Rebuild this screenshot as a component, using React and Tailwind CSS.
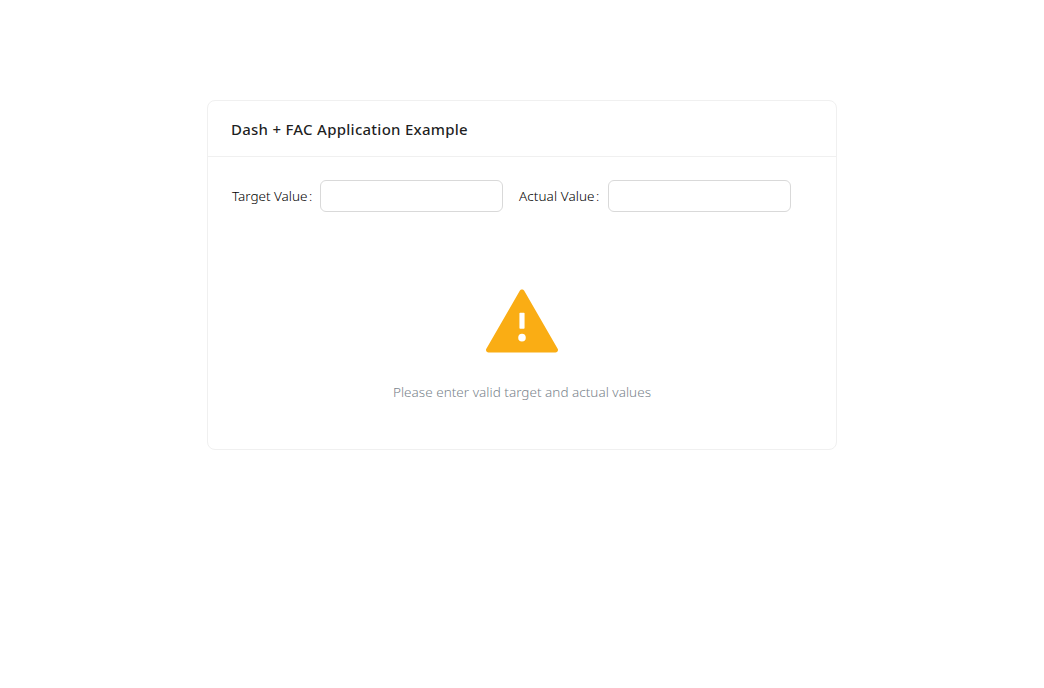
const fields = [
  { label: "Target Value", width: "w-[88px]", tracking: "tracking-[-0.02px]" },
  { label: "Actual Value", width: "w-[89px]", tracking: "tracking-[0.08px]" },
];

function Warning() {
  return (
    <svg viewBox="64 64 896 896" className="block size-[72px]" fill="#faad14" aria-hidden="true">
      <path d="M955.7 856l-416-720c-6.2-10.7-16.9-16-27.700-16s-21.600 5.300-27.700 16l-416 720C56 877.400 71.400 904 96 904h832c24.600 0 40-26.600 27.700-48zM480 416c0-4.400 3.600-8 8-8h48c4.400 0 8 3.600 8 8v184c0 4.400-3.600 8-8 8h-48c-4.400 0-8-3.600-8-8V416zm32 352a48.010 48.010 0 0 1 0-96 48.010 48.010 0 0 1 0 96z" />
    </svg>
  );
}

export default function App() {
  return (
    <main className="min-h-screen bg-white pt-[100px] font-['Noto_Sans',sans-serif] text-[14px] leading-[22px] text-black/88">
      <section className="mx-auto h-[350px] w-[630px] rounded-lg border border-[#f0f0f0]">
        <header className="flex h-14 items-center border-b border-[#f0f0f0] px-6">
          <h1 className="-ml-px text-[15px] font-medium tracking-[0.26px]">Dash + FAC Application Example</h1>
        </header>
        <form className="flex gap-4 px-6 pt-[23px]">
          {fields.map(({ label, width, tracking }) => (
            <label key={label} className="flex items-center">
              <span className={`${width} ${tracking} whitespace-nowrap text-[13.5px] font-[350] text-black`}>
                {label}<span className="ml-[1.5px]">:</span>
              </span>
              <input className="h-8 w-[183px] rounded-md border border-[#d9d9d9] px-3 outline-none" />
            </label>
          ))}
        </form>
        <div className="flex flex-col items-center pt-[73px]">
          <Warning />
          <p className="mt-6 text-[13.5px] font-light tracking-[0.02px] text-[#7a848c]">Please enter valid target and actual values</p>
        </div>
      </section>
    </main>
  );
}
